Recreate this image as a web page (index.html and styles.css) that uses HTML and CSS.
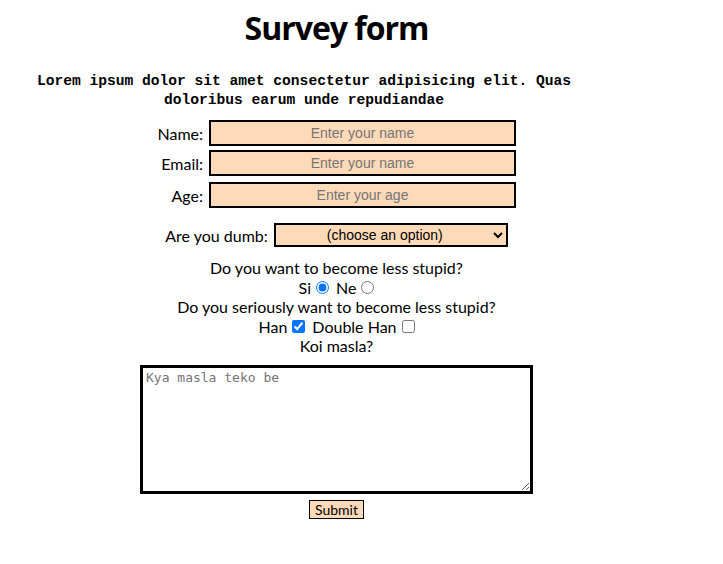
FILE: index.html
```html
<!DOCTYPE html>
<html lang="en">
<head>
<meta charset="utf-8">
<title>Survey form</title>
<link rel="stylesheet" href="styles.css">
</head>
<body>
<main class="page">
  <h1 class="title">Survey form</h1>
  <p class="desc">Lorem ipsum dolor sit amet consectetur adipisicing elit. Quas doloribus earum unde repudiandae</p>
  <form class="form">
    <div class="row row-name"><label for="name" class="lbl">Name:</label><input id="name" class="field" type="text" placeholder="Enter your name"></div>
    <div class="row row-email"><label for="email" class="lbl">Email:</label><input id="email" class="field" type="email" placeholder="Enter your name"></div>
    <div class="row row-age"><label for="age" class="lbl lbl-age">Age:</label><input id="age" class="field" type="text" placeholder="Enter your age"></div>
    <div class="row row-select"><label for="dumb">Are you dumb:</label>
      <select id="dumb" class="select"><option>(choose an option)</option><option>Yes</option><option>No</option></select>
    </div>
    <div class="lines">
      <div class="line">Do you want to become less stupid?</div>
      <div class="line opts"><span>Si</span><input type="radio" name="less" class="radio" checked><span class="opt">Ne</span><input type="radio" name="less" class="radio"></div>
      <div class="line">Do you seriously want to become less stupid?</div>
      <div class="line opts"><span>Han</span><input type="checkbox" class="check" checked><span class="opt">Double Han</span><input type="checkbox" class="check"></div>
      <div class="line">Koi masla?</div>
    </div>
    <textarea class="area" placeholder="Kya masla teko be"></textarea>
    <button type="button" class="submit">Submit</button>
  </form>
</main>
</body>
</html>
```

FILE: styles.css
```css
html, body {
  margin: 0;
  padding: 0;
  background: #ffffff;
}
body {
  font-family: "Lato", "DejaVu Sans", sans-serif;
  color: #000;
}
.page {
  width: 673px;
  display: flex;
  flex-direction: column;
  align-items: center;
}
.title {
  margin: 8px 0 0 0;
  font-size: 32px;
  line-height: 40px;
  font-weight: 700;
  font-family: "Open Sans", "DejaVu Sans", sans-serif;
  letter-spacing: -1px;
}
.desc {
  align-self: flex-start;
  margin: 24px 0 0 8px;
  width: 592px;
  text-align: center;
  font-family: "Liberation Mono", monospace;
  font-weight: 700;
  font-size: 14.6px;
  line-height: 19px;
}
.form {
  display: flex;
  flex-direction: column;
  align-items: center;
  margin-top: 10px;
}
.row {
  display: flex;
  align-items: center;
  gap: 6px;
  font-size: 16px;
}
.lbl {
  min-width: 46px;
  text-align: right;
}
.row-email { margin-top: 4px; }
.row-age { margin-top: 6px; }
.row-select { margin-top: 15px; }
.field {
  width: 307px;
  height: 26px;
  box-sizing: border-box;
  border: 2px solid #000;
  background: #ffdab9;
  text-align: center;
  font-family: "Liberation Sans", Arial, sans-serif;
  font-size: 14px;
  padding: 0 4px;
  margin: 0;
}
.field::placeholder { color: #757575; }
.select {
  width: 234px;
  height: 24px;
  box-sizing: border-box;
  border: 2px solid #000;
  background: #ffdab9;
  text-align: center;
  text-align-last: center;
  font-family: "Liberation Sans", Arial, sans-serif;
  font-size: 14px;
  color: #000;
  margin: 0;
}
.lines {
  margin-top: 11px;
  display: flex;
  flex-direction: column;
  align-items: center;
  font-size: 16px;
}
.line {
  line-height: 19.5px;
  height: 19.5px;
}
.opts {
  display: flex;
  align-items: center;
}
.opt {
  margin-left: 7px;
}
.radio, .check {
  margin: 1px 0 0 5px;
  width: 13px;
  height: 13px;
}
.area {
  margin-top: 9px;
  width: 393px;
  height: 129px;
  box-sizing: border-box;
  border: 3px solid #000;
  background: #fff;
  font-family: "DejaVu Sans Mono", monospace;
  font-size: 13px;
  padding: 2px 3px;
  margin-left: 0;
  margin-right: 0;
}
.area::placeholder { color: #757575; }
.submit {
  margin-top: 6px;
  background: #ffdab9;
  border: 1px solid #000;
  font-family: "Lato", "DejaVu Sans", sans-serif;
  font-size: 14px;
  padding: 0 5px;
  height: 19px;
  line-height: 17px;
  color: #000;
}
```
